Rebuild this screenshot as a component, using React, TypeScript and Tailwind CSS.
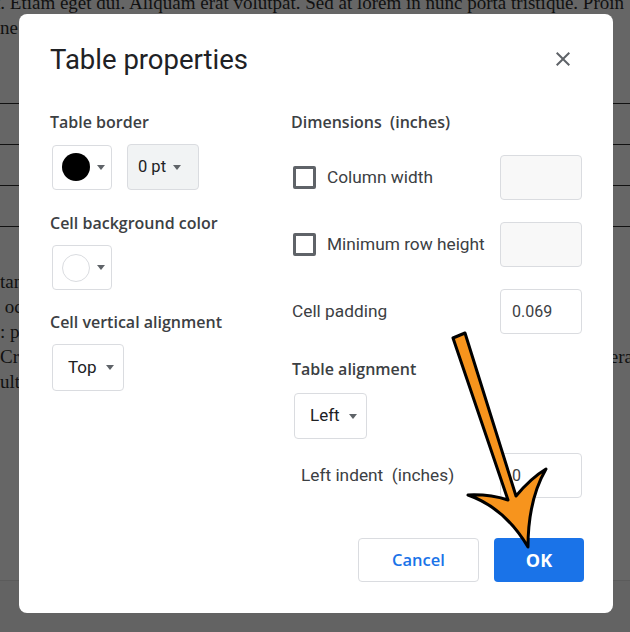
import React from "react"

const Caret = () => (
  <span className="inline-block w-0 h-0 border-x-[4.5px] border-x-transparent border-t-[5px] border-t-[#5f6368]" />
)

const Checkbox = () => (
  <span className="block w-[23px] h-[23px] rounded-[2px] border-[3px] border-[#5f6368] shrink-0" />
)

const labelFont = { fontFamily: '"Open Sans", Roboto, sans-serif' }

function DocBackground() {
  return (
    <div className="flex flex-col text-[19px] leading-[25px] text-[#111] whitespace-nowrap" style={{ fontFamily: '"Liberation Serif", serif' }}>
      <div className="mt-[-10px] flex justify-end pr-[6px]">
        quat. Etiam eget dui. Aliquam erat volutpat. Sed at lorem in nunc porta tristique. Proin
      </div>
      <div>ne sit amet odio lacinia</div>
      <div className="mt-[63px] flex flex-col">
        <div className="h-[41px] border-t border-[#111]" />
        <div className="h-[41px] border-t border-[#111]" />
        <div className="h-[41px] border-t border-[#111]" />
        <div className="border-t border-[#111]" />
      </div>
      <div className="mt-[42px] flex flex-col">
        <div>tan sed</div>
        <div>&nbsp;oc nec</div>
        <div>: po ut</div>
        <div className="flex justify-between mr-[-3px]">
          <span>Cras</span>
          <span>tera</span>
        </div>
        <div>ultr</div>
      </div>
    </div>
  )
}

function SelectButton({ children, className }: { children: React.ReactNode; className: string }) {
  return (
    <div className={"flex items-center rounded-[4px] border border-[#dadce0] " + className}>
      {children}
    </div>
  )
}

function Field({ value, disabled }: { value?: string; disabled?: boolean }) {
  return (
    <div
      className={
        "ml-auto w-[82px] h-[45px] rounded-[4px] border border-[#dadce0] flex items-center pl-[11px] text-[16px] text-[#3c4043] " +
        (disabled ? "bg-[#f8f8f8]" : "bg-white")
      }
    >
      {value}
    </div>
  )
}

function Label({ children, className = "" }: { children: React.ReactNode; className?: string }) {
  return (
    <div className={"h-5 leading-5 text-[16px] font-semibold text-[#3c4043] " + className} style={labelFont}>
      {children}
    </div>
  )
}

function Dialog() {
  return (
    <div className="absolute left-[19px] top-[14px] w-[594px] h-[599px] bg-white rounded-[8px] flex flex-col text-[#3c4043]" style={{ fontFamily: 'Roboto, "Open Sans", sans-serif' }}>
      <div className="pt-[30px] pl-[31px] pr-[38px] flex items-center justify-between">
        <div className="text-[27.5px] leading-[32px] text-[#202124]">Table properties</div>
        <svg width="24" height="24" viewBox="0 0 24 24" className="mt-[-2px]">
          <path
            fill="#5f6368"
            d="M19 6.41L17.59 5 12 10.59 6.41 5 5 6.41 10.59 12 5 17.59 6.41 19 12 13.41 17.59 19 19 17.59 13.41 12z"
          />
        </svg>
      </div>

      <div className="mt-[36px] pl-[31px] grid grid-cols-[241px_291px]">
        <div className="flex flex-col">
          <Label>Table border</Label>
          <div className="mt-[12px] flex items-center gap-[15px]">
            <SelectButton className="ml-[2px] w-[60px] h-[45px] pl-[9px] gap-[7px]">
              <span className="w-[28px] h-[28px] rounded-full bg-black" />
              <Caret />
            </SelectButton>
            <SelectButton className="w-[72px] h-[46px] pl-[10px] gap-[7px] bg-[#f1f3f4]">
              <span className="text-[16.5px] text-[#202124]">0 pt</span>
              <Caret />
            </SelectButton>
          </div>
          <Label className="mt-[23px]">Cell background color</Label>
          <SelectButton className="mt-[12px] ml-[2px] w-[60px] h-[45px] pl-[9px] gap-[7px]">
            <span className="w-[28px] h-[28px] rounded-full bg-white border border-[#dadce0]" />
            <Caret />
          </SelectButton>
          <Label className="mt-[22px]">Cell vertical alignment</Label>
          <SelectButton className="mt-[12px] ml-[2px] w-[72px] h-[47px] pl-[15px] gap-[9px]">
            <span className="text-[17px] text-[#202124]">Top</span>
            <Caret />
          </SelectButton>
        </div>

        <div className="flex flex-col">
          <Label>Dimensions&nbsp; (inches)</Label>
          <div className="mt-[23px] h-[45px] flex items-center">
            <span className="ml-[2px]"><Checkbox /></span>
            <span className="ml-[11px] text-[17.3px]">Column width</span>
            <Field disabled />
          </div>
          <div className="mt-[22px] h-[45px] flex items-center">
            <span className="ml-[2px]"><Checkbox /></span>
            <span className="ml-[11px] text-[17.3px]">Minimum row height</span>
            <Field disabled />
          </div>
          <div className="mt-[22px] h-[45px] flex items-center">
            <span className="ml-[1px] text-[17.3px]">Cell padding</span>
            <Field value="0.069" />
          </div>
          <Label className="mt-[25px] ml-[1px]">Table alignment</Label>
          <SelectButton className="mt-[14px] ml-[3px] w-[73px] h-[46px] pl-[15px] gap-[9px]">
            <span className="text-[17px] text-[#202124]">Left</span>
            <Caret />
          </SelectButton>
          <div className="mt-[14px] h-[45px] flex items-center">
            <span className="ml-[10px] text-[17.3px]">Left indent&nbsp; (inches)</span>
            <Field value="0" />
          </div>
        </div>
      </div>

      <div className="mt-auto pb-[31px] pr-[29px] flex justify-end gap-[15px]" style={labelFont}>
        <button className="w-[121px] h-[44px] rounded-[4px] border border-[#dadce0] bg-white text-[#1a73e8] text-[16.5px] font-semibold">
          Cancel
        </button>
        <button className="w-[90px] h-[44px] rounded-[4px] bg-[#1a73e8] text-white text-[18px] font-bold">
          OK
        </button>
      </div>
    </div>
  )
}

function Arrow() {
  return (
    <svg className="absolute left-0 top-0 pointer-events-none" width="630" height="632" viewBox="0 0 630 632">
      <path
        d="M 453 338 L 465 333 L 516 496 Q 531 478 546 469 Q 528 500 528 547 Q 505 508 468 495 Q 489 494 508 500 Z"
        fill="#f7941d"
        stroke="#000"
        strokeWidth="3"
        strokeLinejoin="round"
      />
    </svg>
  )
}

export default function App() {
  return (
    <div className="relative w-[630px] h-[632px] overflow-hidden bg-[#666666]">
      <DocBackground />
      <div className="absolute left-0 right-0 top-[580px] bottom-0 bg-[#636363] border-t border-[#5b5b5b]" />
      <Dialog />
      <Arrow />
    </div>
  )
}
